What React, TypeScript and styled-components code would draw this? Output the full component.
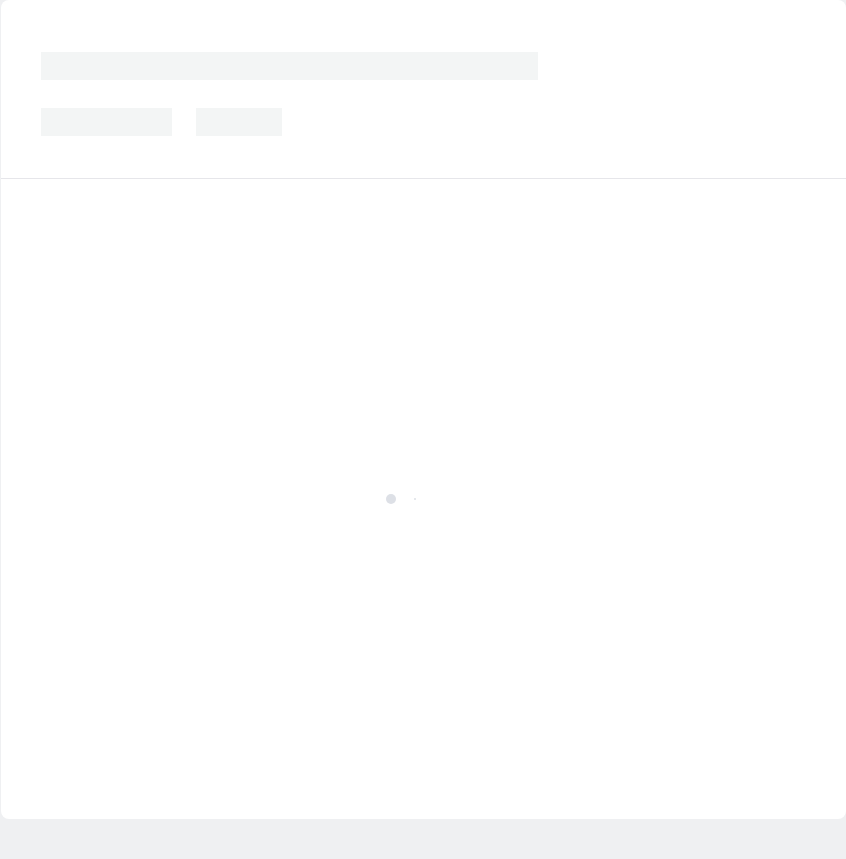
import styled, { createGlobalStyle } from 'styled-components';

const GlobalStyle = createGlobalStyle`
  html, body {
    margin: 0;
    padding: 0;
    background: #eff0f2;
    font-family: "Liberation Sans", Arial, sans-serif;
  }
`;

const Page = styled.div`
  padding: 0 0 40px 1px;
`;

const Card = styled.div`
  background: #ffffff;
  border-radius: 8px;
  height: 819px;
  display: flex;
  flex-direction: column;
  overflow: hidden;
`;

const Header = styled.div`
  padding: 52px 40px 42px;
  border-bottom: 1px solid #e6e6ea;
  display: flex;
  flex-direction: column;
  gap: 28px;
`;

const Row = styled.div`
  display: flex;
  gap: 24px;
`;

const Skeleton = styled.div<{ $w: number }>`
  width: ${(p) => p.$w}px;
  height: 28px;
  background: #f3f5f5;
`;

const Body = styled.div`
  flex: 1;
  display: flex;
  align-items: center;
  justify-content: center;
`;

const Spinner = styled.div`
  display: flex;
  align-items: center;
  gap: 14px;
  margin-right: 18px;
`;

const Dot = styled.span<{ $size: number }>`
  width: 10px;
  height: 10px;
  display: flex;
  align-items: center;
  justify-content: center;

  &::after {
    content: '';
    width: ${(p) => p.$size}px;
    height: ${(p) => p.$size}px;
    border-radius: 50%;
    background: #dde0e6;
  }
`;

export default function App() {
  return (
    <>
      <GlobalStyle />
      <Page>
        <Card>
          <Header>
            <Skeleton $w={497} />
            <Row>
              <Skeleton $w={131} />
              <Skeleton $w={86} />
            </Row>
          </Header>
          <Body>
            <Spinner>
              <Dot $size={10} />
              <Dot $size={2} />
              <Dot $size={0} />
            </Spinner>
          </Body>
        </Card>
      </Page>
    </>
  );
}
